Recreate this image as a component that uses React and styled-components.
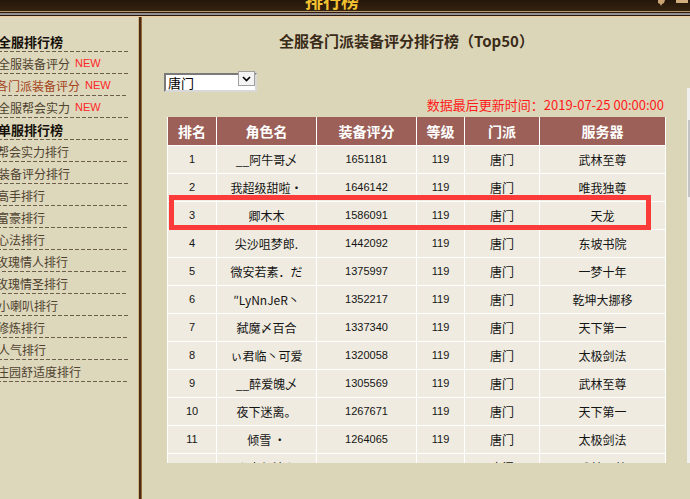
import React from 'react'
import styled, { createGlobalStyle } from 'styled-components'

const GlobalStyle = createGlobalStyle`
  html, body {
    margin: 0;
    padding: 0;
    overflow: hidden;
    background: #dcd6b9;
  }
  * {
    box-sizing: border-box;
  }
`

const Page = styled.div`
  width: 690px;
  height: 499px;
  display: flex;
  flex-direction: column;
  overflow: hidden;
  font-family: "Noto Sans CJK SC", "Liberation Sans", sans-serif;
  background: #dcd6b9;
`

const TopBar = styled.div`
  height: 11px;
  display: flex;
  align-items: flex-start;
  overflow: hidden;
  background: linear-gradient(to bottom, #24160a, #35230f);
`

const WindowTitle = styled.div`
  margin-left: 305px;
  margin-top: -9px;
  font-size: 18px;
  line-height: 18px;
  font-weight: bold;
  color: #f2c230;
`

const WindowIcons = styled.div`
  margin-left: auto;
  margin-right: 2px;
  display: flex;
  gap: 10px;
  align-items: flex-start;
`

const Stripes = styled.div`
  height: 6px;
  background: linear-gradient(
    to bottom,
    #b89a72 0px, #b89a72 1px,
    #2a1a0c 1px, #2a1a0c 2px,
    #958f94 2px, #958f94 4px,
    #2a1a0c 4px, #2a1a0c 5px,
    #efc9a0 5px, #efc9a0 6px
  );
`

const Body = styled.div`
  flex: 1;
  display: flex;
  min-height: 0;
`

const Sidebar = styled.div`
  width: 138px;
  flex-shrink: 0;
  padding-top: 13px;
  background: #ddd7bb;
`

const MenuItem = styled.div`
  width: 130px;
  height: 22px;
  display: flex;
  align-items: center;
  white-space: nowrap;
  margin-left: ${p => p.$shift || -2}px;
  font-size: ${p => (p.$head ? 13 : 12)}px;
  font-weight: ${p => (p.$head ? 'bold' : 'normal')};
  color: ${p => (p.$head ? '#15100a' : p.$active ? '#a2441c' : '#4f4230')};
  background-image: linear-gradient(to right, #6e5e4c 4px, transparent 4px);
  background-size: 6px 1px;
  background-repeat: repeat-x;
  background-position: left bottom;
`

const NewTag = styled.span`
  margin-left: 5px;
  font-family: "Liberation Sans", Arial, sans-serif;
  font-size: 11px;
  color: #ff2626;
`

const Divider = styled.div`
  width: 4px;
  flex-shrink: 0;
  background: linear-gradient(
    to right,
    #cdb78a 0px, #cdb78a 1px,
    #4a2a10 1px, #4a2a10 3px,
    #94683a 3px, #94683a 4px
  );
`

const Main = styled.div`
  flex: 1;
  overflow: hidden;
  display: flex;
  flex-direction: column;
  background: #dcd6b9;
`

const Heading = styled.h1`
  width: 529px;
  margin: 15px 0 0;
  text-align: center;
  font-size: 15px;
  line-height: 18px;
  font-weight: bold;
  color: #3a2b18;
`

const SelectWrap = styled.div`
  position: relative;
  width: 93px;
  height: 19px;
  margin: 19px 0 0 22px;
`

const Select = styled.select`
  appearance: none;
  width: 100%;
  height: 100%;
  padding: 0 0 0 2px;
  font-family: "Noto Sans CJK SC", sans-serif;
  font-size: 13px;
  line-height: 15px;
  color: #000;
  background: #fff;
  border: 2px solid;
  border-color: #7a7a7a #d8d8d8 #d8d8d8 #7a7a7a;
  border-radius: 0;
  outline: none;
`

const SelectArrow = styled.span`
  position: absolute;
  top: 2px;
  right: 2px;
  width: 17px;
  height: 15px;
  display: flex;
  align-items: center;
  justify-content: center;
  background: #f4f4f4;
  border: 1px solid #a0a0a0;
  pointer-events: none;
`

const ScrollRow = styled.div`
  display: flex;
  width: 562px;
  height: 375px;
  flex-shrink: 0;
`

const ScrollArea = styled.div`
  width: 545px;
  height: 100%;
  padding: 10px 0 0 25px;
  overflow: hidden;
`

const ScrollTrack = styled.div`
  width: 17px;
  height: 100%;
  padding-top: 32px;
  background: #f0f0f0;
`

const ScrollThumb = styled.div`
  width: 15px;
  height: 77px;
  margin-left: 1px;
  background: #c4c4c4;
`

const Board = styled.div`
  width: 498px;
`

const UpdateTime = styled.div`
  text-align: right;
  padding-right: 1px;
  font-size: 13px;
  line-height: 14px;
  color: #ff1a1a;
  margin-bottom: 5px;
`

const TableWrap = styled.div`
  position: relative;
`

const Table = styled.table`
  width: 498px;
  border-collapse: collapse;
  table-layout: fixed;
`

const Th = styled.th`
  height: 28px;
  padding: 0;
  background: #9c6058;
  color: #fff;
  font-size: 14px;
  font-weight: bold;
  border: 1px solid #fff;
  border-top: none;
`

const Td = styled.td`
  height: 28px;
  padding: 0;
  text-align: center;
  white-space: nowrap;
  overflow: hidden;
  background: #efebe0;
  color: #141414;
  font-size: ${p => (p.$num ? 11 : 12)}px;
  font-family: ${p => (p.$num ? '"Liberation Sans", Arial, sans-serif' : '"Noto Sans CJK SC", sans-serif')};
  border: 1px solid #fff;
`

const Highlight = styled.div`
  position: absolute;
  left: 2px;
  top: 78px;
  width: 482px;
  height: 35px;
  border: 5px solid #fb3a3a;
  pointer-events: none;
`

const menu = [
  { label: '全服排行榜', head: true, shift: 0 },
  { label: '全服装备评分', isNew: true },
  { label: '各门派装备评分', isNew: true, active: true, shift: -4 },
  { label: '全服帮会实力', isNew: true },
  { label: '单服排行榜', head: true, shift: 0 },
  { label: '帮会实力排行', shift: -3 },
  { label: '装备评分排行' },
  { label: '高手排行', shift: -3 },
  { label: '富豪排行', shift: -3 },
  { label: '心法排行', shift: -3 },
  { label: '玫瑰情人排行', shift: -4 },
  { label: '玫瑰情圣排行', shift: -4 },
  { label: '小喇叭排行' },
  { label: '修炼排行', shift: -3 },
  { label: '人气排行' },
  { label: '庄园舒适度排行', shift: -3 },
]

const columns = [
  { title: '排名', width: 49 },
  { title: '角色名', width: 100 },
  { title: '装备评分', width: 100 },
  { title: '等级', width: 48 },
  { title: '门派', width: 75 },
  { title: '服务器', width: 126 },
]

const rows = [
  ['__阿牛哥乄', 1651181, '武林至尊'],
  ['我超级甜啦·', 1646142, '唯我独尊'],
  ['卿木木', 1586091, '天龙'],
  ['尖沙咀梦郎.', 1442092, '东坡书院'],
  ['微安若素．だ', 1375997, '一梦十年'],
  ['″LyNnJeR丶', 1352217, '乾坤大挪移'],
  ['弑魔〆百合', 1337340, '天下第一'],
  ['ぃ君临丶可爱', 1320058, '太极剑法'],
  ['__醉爱魄乄', 1305569, '武林至尊'],
  ['夜下迷离。', 1267671, '天下第一'],
  ['倾雪 ·', 1264065, '太极剑法'],
  ['☆吉师法心', 1249853, '武林至尊'],
  ['浅唱丶离歌', 1238410, '唯我独尊'],
  ['墨染倾城', 1226795, '天龙'],
  ['丶若水三千', 1219302, '东坡书院'],
]

const App = () => {
  return (
    <Page>
      <GlobalStyle />
      <TopBar>
        <WindowTitle>排行榜</WindowTitle>
        <WindowIcons>
          <svg width="9" height="6" viewBox="0 0 9 6">
            <path d="M1 0 L8 0 L7 3 L5 4 L4 6 L3 4 L1 3 Z" fill="#c9a373" />
          </svg>
          <svg width="12" height="4" viewBox="0 0 12 4">
            <rect x="0" y="0" width="12" height="3" fill="#d2ad7d" />
          </svg>
        </WindowIcons>
      </TopBar>
      <Stripes />
      <Body>
        <Sidebar>
          {menu.map(item => (
            <MenuItem
              key={item.label}
              $head={item.head}
              $active={item.active}
              $shift={item.shift}
            >
              {item.label}
              {item.isNew && <NewTag>NEW</NewTag>}
            </MenuItem>
          ))}
        </Sidebar>
        <Divider />
        <Main>
          <Heading>全服各门派装备评分排行榜（Top50）</Heading>
          <SelectWrap>
            <Select defaultValue="唐门">
              <option>唐门</option>
              <option>少林</option>
              <option>武当</option>
              <option>峨眉</option>
            </Select>
            <SelectArrow>
              <svg width="9" height="6" viewBox="0 0 9 6">
                <path d="M1 1 L4.5 4.5 L8 1" stroke="#000" strokeWidth="1.6" fill="none" />
              </svg>
            </SelectArrow>
          </SelectWrap>
          <ScrollRow>
            <ScrollArea>
              <Board>
                <UpdateTime>数据最后更新时间：2019-07-25 00:00:00</UpdateTime>
                <TableWrap>
                  <Table>
                    <colgroup>
                      {columns.map(c => (
                        <col key={c.title} style={{ width: c.width }} />
                      ))}
                    </colgroup>
                    <thead>
                      <tr>
                        {columns.map(c => (
                          <Th key={c.title}>{c.title}</Th>
                        ))}
                      </tr>
                    </thead>
                    <tbody>
                      {rows.map((r, i) => (
                        <tr key={i}>
                          <Td $num>{i + 1}</Td>
                          <Td>{r[0]}</Td>
                          <Td $num>{r[1]}</Td>
                          <Td $num>119</Td>
                          <Td>唐门</Td>
                          <Td>{r[2]}</Td>
                        </tr>
                      ))}
                    </tbody>
                  </Table>
                  <Highlight />
                </TableWrap>
              </Board>
            </ScrollArea>
            <ScrollTrack>
              <ScrollThumb />
            </ScrollTrack>
          </ScrollRow>
        </Main>
      </Body>
    </Page>
  )
}

export default App
